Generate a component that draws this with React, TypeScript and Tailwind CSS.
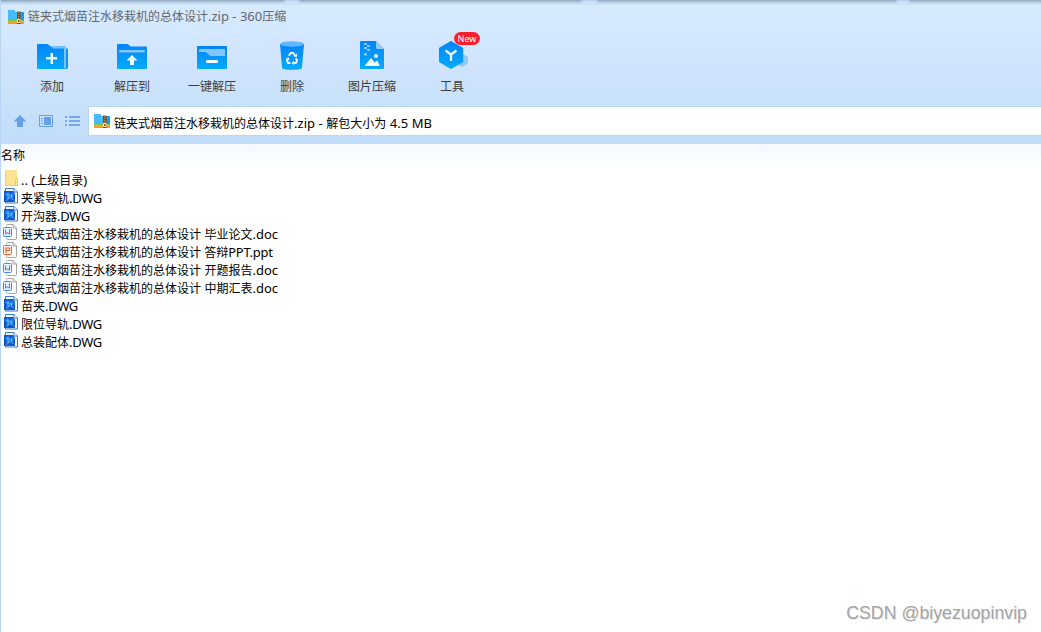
import type { ReactNode } from "react";

type FileKind = "folder" | "dwg" | "doc" | "ppt";

const files: { kind: FileKind; name: string; tracking?: string }[] = [
    { kind: "folder", name: ".. (上级目录)" },
    { kind: "dwg", name: "夹紧导轨.DWG", tracking: "tracking-[-0.35px]" },
    { kind: "dwg", name: "开沟器.DWG", tracking: "tracking-[-0.35px]" },
    { kind: "doc", name: "链夹式烟苗注水移栽机的总体设计 毕业论文.doc" },
    { kind: "ppt", name: "链夹式烟苗注水移栽机的总体设计 答辩PPT.ppt", tracking: "tracking-[-0.25px]" },
    { kind: "doc", name: "链夹式烟苗注水移栽机的总体设计 开题报告.doc" },
    { kind: "doc", name: "链夹式烟苗注水移栽机的总体设计 中期汇表.doc" },
    { kind: "dwg", name: "苗夹.DWG", tracking: "tracking-[-0.35px]" },
    { kind: "dwg", name: "限位导轨.DWG", tracking: "tracking-[-0.35px]" },
    { kind: "dwg", name: "总装配体.DWG", tracking: "tracking-[-0.35px]" },
];

// Latin runs are set one pixel larger than the Chinese text
const Label = ({ text, tracking = "" }: { text: string; tracking?: string }) => (
    <span className="whitespace-pre text-[12px] leading-[18px]">
        {text.split(/([\x20-\x7e]+)/).map((part, i) =>
            i % 2 ? (
                <span key={i} className={`text-[13px] leading-none ${tracking}`}>{part}</span>
            ) : (
                part
            )
        )}
    </span>
);

const ZipIcon = () => (
    <svg width="16" height="16" viewBox="0 0 16 16" className="shrink-0">
        <path d="M0 2q0-1 1-1h5l1.500 2H15q1 0 1 1v8H0z" fill="#1d97ea" />
        <path d="M0 2q0-1 1-1h4.500L7.500 3H9v8H0z" fill="#45bdfc" />
        <path d="M0 11h16v1.500H0z" fill="#72c544" />
        <path d="M0 12.500h16V14q0 1-1 1H1q-1 0-1-1z" fill="#f59a23" />
        <path d="M9 2.500h3.500V15H9z" fill="#7d4a26" />
        <path d="M10.700 3v7" stroke="#d69a4b" strokeWidth="1.200" strokeDasharray="1 1" />
        <rect x="9.500" y="10.500" width="2.500" height="3" fill="#8a4a1c" stroke="#ffe29a" strokeWidth="1" />
    </svg>
);

const BlueFill = ({ id }: { id: string }) => (
    <defs>
        <linearGradient id={id} x1="0" y1="0" x2="0" y2="1">
            <stop offset="0" stopColor="#0584f8" />
            <stop offset="1" stopColor="#03aafd" />
        </linearGradient>
    </defs>
);

const AddIcon = () => (
    <svg width="34" height="36" viewBox="0 0 34 36">
        <BlueFill id="add" />
        <path d="M30 10q3 0 3 2v18q0 1-3 1z" fill="#0797fb" />
        <path d="M2 7q0-1 1-1h9q1 0 2 1l1.500 1.500H30q1 0 1 1V30q0 1-1 1H3q-1 0-1-1z" fill="url(#add)" />
        <path d="M16 8.500h14q1 0 1 1v20q0 .8-1 .8h-1V10.500H18z" fill="#7cc3fc" />
        <path d="M15.500 15H18v4h4v2.500h-4V26h-2.500v-4.500H11V19h4.500z" fill="#eefaff" />
    </svg>
);

const ExtractIcon = () => (
    <svg width="34" height="36" viewBox="0 0 34 36">
        <BlueFill id="extract" />
        <path d="M2 7q0-1 1-1h9q1 0 2 1l1.500 1.500H31q1 0 1 1V30q0 1-1 1H3q-1 0-1-1z" fill="url(#extract)" />
        <path d="M4 14.500V13q0-1 1-1h24q1 0 1 1v1.500z" fill="#82c6fd" />
        <path d="M17 17l5.500 5.500h-3.500V27h-4v-4.500h-3.500z" fill="#f2fbff" />
    </svg>
);

const QuickIcon = () => (
    <svg width="34" height="36" viewBox="0 0 34 36">
        <BlueFill id="quick" />
        <rect x="2" y="8" width="30" height="23" rx="1" fill="url(#quick)" />
        <path d="M4 12q0-1 1-1h24q1 0 1 1v6H16q-1 0-2-1l-2.500-2.500q-.5-.5-1.500-.5H4z" fill="#82c6fd" />
        <rect x="11" y="22" width="12" height="3" rx="1" fill="#f2fbff" />
    </svg>
);

const TrashIcon = () => (
    <svg width="34" height="36" viewBox="0 0 34 36">
        <BlueFill id="trash" />
        <path d="M5 6h24l-2 23q-.2 2-2 2.200q-8 1.300-16 0Q7.200 31 7 29z" fill="url(#trash)" />
        <ellipse cx="17" cy="6" rx="12" ry="2.800" fill="#62b8fc" />
        <g fill="none" stroke="#e6f5ff" strokeWidth="2">
            <path d="M13.800 17.700L15.800 15h2.400l2 2.800" />
            <path d="M20.800 20.200l1.300 2.400-1.300 2.400H18.500" />
            <path d="M15.500 25h-2.300l-1.300-2.400 1-2.300" />
        </g>
        <path d="M18.500 18.800h3.500v-3.500zM19 22.800v4.400l-2.500-2.200zM10.700 20.700l3-1.400.9 3.200z" fill="#e6f5ff" />
    </svg>
);

const ImageIcon = () => (
    <svg width="34" height="36" viewBox="0 0 34 36">
        <BlueFill id="image" />
        <path d="M6 3h15l8 8v19q0 1-1 1H6q-1 0-1-1V4q0-1 1-1z" fill="url(#image)" />
        <path d="M21 3l8 8h-7q-1 0-1-1z" fill="#8bcdfd" />
        <path d="M9 5h3v2H9zM12 7h3v2h-3zM9 9h3v2H9zM12 11h3v2h-3zM9 15h3v2.500H9z" fill="#83c9fc" />
        <circle cx="21" cy="18" r="2" fill="#e7f7ff" />
        <path d="M9.500 28l6-7.500q.5-.5 1 0l3 4 2-1.500q.5-.4 1 0l2 4q.3 1-.5 1z" fill="#f2fbff" />
    </svg>
);

const ToolsIcon = () => (
    <svg width="34" height="36" viewBox="0 0 34 36">
        <BlueFill id="tools" />
        <path d="M27 15.500l6 3.500v6.500L27 29l-6-3.500V19z" fill="#8bc9fb" />
        <path d="M16 3l11.500 6.500q.7.500.7 1.200v12.600q0 .7-.7 1.200L16 31 4.700 24.500q-.7-.5-.7-1.200V10.700q0-.7.7-1.200z" fill="url(#tools)" />
        <path d="M10.500 12.500l5.500 4 5.500-4M16 16.500V23" fill="none" stroke="#eefaff" strokeWidth="2.300" />
    </svg>
);

const tools: { label: string; icon: ReactNode; badge?: string }[] = [
    { label: "添加", icon: <AddIcon /> },
    { label: "解压到", icon: <ExtractIcon /> },
    { label: "一键解压", icon: <QuickIcon /> },
    { label: "删除", icon: <TrashIcon /> },
    { label: "图片压缩", icon: <ImageIcon /> },
    { label: "工具", icon: <ToolsIcon />, badge: "New" },
];

const FileIcon = ({ kind }: { kind: FileKind }) => {
    if (kind === "folder") {
        return (
            <svg width="17" height="18" viewBox="0 0 17 18">
                <path d="M2 1.500q0-.5.500-.5H13q1 0 1 1v7l1 1v6q0 1-1 1H3q-1 0-1-1z" fill="#fce391" />
                <path d="M2.500 2v14.500H14M12.500 16v-6l2-1v7z" fill="none" stroke="#efcf6b" strokeWidth="1" />
            </svg>
        );
    }
    if (kind === "dwg") {
        return (
            <svg width="17" height="18" viewBox="0 0 17 18">
                <path d="M2.500 1.500h8.500l3.500 3.500v11h-12z" fill="#eef6ff" stroke="#3f74c4" />
                <path d="M11 1.500V5h3.500" fill="#fff" stroke="#3f74c4" />
                <path d="M1 4h9l2 3v8H1z" fill="#0b5bd0" />
                <path d="M2 7l3-2 2 2 3-1 1 3-2 1 3 4h-2l-3-3-3 3-2-1 2-3z" fill="#2f8cf0" />
                <path d="M4 7.500l2 1M8 8.500l1 2M5 12l1-1.500" fill="none" stroke="#8fcbff" />
                <path d="M1.500 13.500l2-2.500M9 13l1.500 1" stroke="#043b9b" />
            </svg>
        );
    }
    const color = kind === "doc" ? "#4a86ea" : "#ee6534";
    return (
        <svg width="17" height="18" viewBox="0 0 17 18" fill="none">
            <path d="M3.500 3.500v-1q0-1 1-1H10L13.500 5v10.500q0 1-1 1h-8q-1 0-1-1v-1" fill="#fff" stroke="#a5a5a5" />
            <path d="M10 1.500V5h3.500" stroke="#a5a5a5" />
            <rect x=".5" y="4.500" width="8" height="9" rx="1" fill={kind === "doc" ? "#e6f0ff" : "#fff0ea"} stroke={color} />
            {kind === "doc" ? (
                <path d="M2.500 6.500V11h.8L4.500 9.300 5.700 11h.8V6.500" stroke={color} />
            ) : (
                <path d="M3 12V7h3.500v2.500H3" stroke={color} strokeWidth="1.200" />
            )}
        </svg>
    );
};

const TopShadow = () => (
    <div className="absolute inset-x-0 top-0 h-[5px] bg-gradient-to-b from-[#8fa5bc] via-[#b9cfe3] to-transparent">
        <div className="absolute left-[283px] top-0 h-[5px] w-4 rounded-b-full bg-[#cbe2fc] blur-[1px]" />
        <div className="absolute left-[580px] top-0 h-[5px] w-[17px] rounded-b-full bg-[#cbe2fc] blur-[1px]" />
        <div className="absolute left-[895px] top-0 h-[5px] w-[14px] rounded-b-full bg-[#cbe2fc] blur-[1px]" />
    </div>
);

export default function App() {
    return (
        <div className="relative flex h-[632px] w-[1041px] flex-col overflow-hidden border-l border-[#b7d5f5] bg-white font-['Noto_Sans','Noto_Sans_CJK_SC',sans-serif] text-black">
            <header className="flex h-36 shrink-0 flex-col bg-gradient-to-b from-[#d7ebff] via-[#cfe4fc] to-[#c1ddf9]">
                <TopShadow />
                <div className="flex h-[33px] items-center gap-1 pl-[7px] text-[#636870]">
                    <ZipIcon />
                    <Label text="链夹式烟苗注水移栽机的总体设计.zip - 360压缩" />
                </div>

                <nav className="flex h-[74px] pl-[11px] pt-[5px]">
                    {tools.map((tool) => (
                        <div key={tool.label} className="relative flex w-20 flex-col items-center text-[#3b3d41]">
                            {tool.icon}
                            <div className="mt-1 flex h-[18px] items-center">
                                <Label text={tool.label} />
                            </div>
                            {tool.badge && (
                                <span className="absolute left-[42px] top-[-6px] flex h-[13px] w-[26px] items-center justify-center rounded-full bg-[#f91f2d] text-[9px] leading-none text-white">
                                    {tool.badge}
                                </span>
                            )}
                        </div>
                    ))}
                </nav>

                <div className="flex h-7 items-center">
                    <div className="flex w-[87px] shrink-0 items-center gap-3 pl-3 text-[#659fe9]">
                        <svg width="14" height="14" viewBox="0 0 14 14" fill="currentColor">
                            <path d="M7 1l6.500 6.500H10V13H4V7.500H.5z" />
                        </svg>
                        <svg width="14" height="14" viewBox="0 0 14 14" fill="currentColor">
                            <path d="M.5 1.500h13v11H.5z" fill="none" stroke="currentColor" />
                            <path d="M2 4h2v1H2zM2 6.500h2v1H2zM2 9h2v1H2zM5 3h7v8H5z" />
                        </svg>
                        <svg width="15" height="14" viewBox="0 0 15 14" fill="currentColor">
                            <path d="M0 2h2v2H0zM4 2h11v2H4zM0 6h2v2H0zM4 6h11v2H4zM0 10h2v2H0zM4 10h11v2H4z" opacity=".85" />
                        </svg>
                    </div>
                    <div className="flex h-[30px] flex-1 items-center gap-1 border-y border-l border-[#b9d6f3] bg-white pl-[5px]">
                        <ZipIcon />
                        <div className="pt-[2px]">
                            <Label text="链夹式烟苗注水移栽机的总体设计.zip - 解包大小为 4.5 MB" tracking="tracking-[0.05px]" />
                        </div>
                    </div>
                </div>
            </header>

            <div className="flex h-[26px] shrink-0 items-start bg-gradient-to-b from-[#f3f9ff] to-white pt-[3px]">
                <Label text="名称" />
            </div>
            <ul className="-mt-px flex-1">
                {files.map((file) => (
                    <li key={file.name} className="flex h-[18px] items-center gap-[1px] pl-[2px]">
                        <FileIcon kind={file.kind} />
                        <div className="pt-[2px]">
                            <Label text={file.name} tracking={file.tracking} />
                        </div>
                    </li>
                ))}
            </ul>

            <div className="absolute bottom-[7px] right-[14px] font-['Liberation_Sans',sans-serif] text-[17.750px] leading-6 text-[#a3a3a3] [text-shadow:1px_1px_0_#ececec]">
                CSDN @biyezuopinvip
            </div>
        </div>
    );
}
